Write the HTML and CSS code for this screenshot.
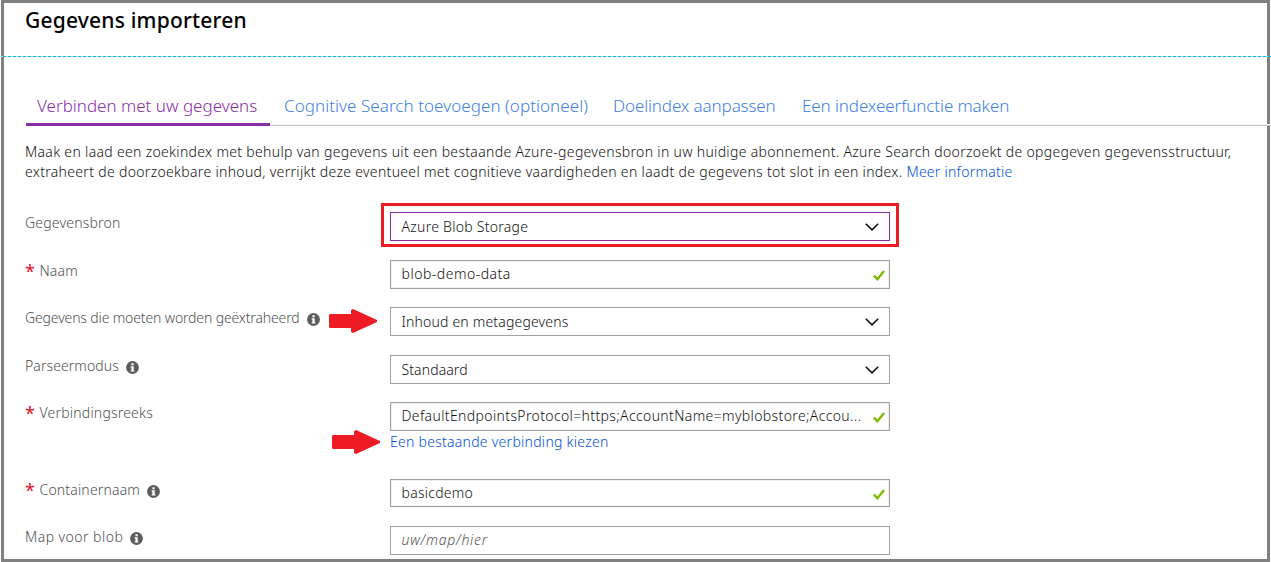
FILE: index.html
```
<!DOCTYPE html>
<html lang="nl">
<head>
<meta charset="utf-8">
<title>Gegevens importeren</title>
<link rel="stylesheet" href="styles.css">
</head>
<body>
<svg class="defs" aria-hidden="true">
  <symbol id="info" viewBox="0 0 13 13">
    <circle cx="6.5" cy="6.5" r="6.4" fill="#5c5c5c"/>
    <path d="M5.4 2.3h2.3v2H5.4zM4.6 5.3h3.1v4.1h.8v1.1H4.6V9.4h.8v-3h-.8z" fill="#fff"/>
  </symbol>
  <symbol id="chevron" viewBox="0 0 14 8">
    <path d="M.8 .8L7 6.8L13.2 .8" fill="none" stroke="#111" stroke-width="1.6"/>
  </symbol>
  <symbol id="check" viewBox="0 0 12 11">
    <path d="M.9 5.6L4.4 9.2L11.1 .9" fill="none" stroke="#7fba00" stroke-width="2.4"/>
  </symbol>
  <symbol id="arrow" viewBox="0 0 48 24">
    <path d="M1 5H22V1L24 0L48 11V13L24 24L22 23V19H1L0 18V6Z" fill="#ed1c24"/>
  </symbol>
</svg>
<main class="frame">
  <header class="header"><h1 class="title">Gegevens importeren</h1></header>
  <nav class="tabs">
    <a class="tab tab-active">Verbinden met uw gegevens</a>
    <a class="tab tab-cognitive">Cognitive Search toevoegen (optioneel)</a>
    <a class="tab tab-index">Doelindex aanpassen</a>
    <a class="tab tab-indexer">Een indexeerfunctie maken</a>
  </nav>
  <p class="intro">Maak en laad een zoekindex met behulp van gegevens uit een bestaande Azure-gegevensbron in uw huidige abonnement. Azure Search doorzoekt de opgegeven gegevensstructuur,<br>extraheert de doorzoekbare inhoud, verrijkt deze eventueel met cognitieve vaardigheden en laadt de gegevens tot slot in een index. <a class="link">Meer informatie</a></p>
  <form class="form">
    <div class="row">
      <label class="label t-source">Gegevensbron</label>
      <div class="field field-focus"><span class="value t-azure">Azure Blob Storage</span><svg class="chevron"><use href="#chevron"/></svg></div>
    </div>
    <div class="row short">
      <label class="label"><span class="req">*</span><span class="t-name">Naam</span></label>
      <div class="field input"><span class="value t-blob">blob-demo-data</span><svg class="check"><use href="#check"/></svg></div>
    </div>
    <div class="row">
      <label class="label"><span class="t-extract">Gegevens die moeten worden geëxtraheerd</span><svg class="info"><use href="#info"/></svg></label>
      <div class="field"><span class="value t-content">Inhoud en metagegevens</span><svg class="chevron"><use href="#chevron"/></svg><svg class="arrow arrow-content"><use href="#arrow"/></svg></div>
    </div>
    <div class="row short">
      <label class="label"><span class="t-parse">Parseermodus</span><svg class="info"><use href="#info"/></svg></label>
      <div class="field"><span class="value t-default">Standaard</span><svg class="chevron"><use href="#chevron"/></svg></div>
    </div>
    <div class="row tall">
      <label class="label"><span class="req">*</span><span class="t-conn">Verbindingsreeks</span></label>
      <div class="control">
        <div class="field input"><span class="value t-string">DefaultEndpointsProtocol=https;AccountName=myblobstore;Accou...</span><svg class="check"><use href="#check"/></svg></div>
        <a class="link choose">Een bestaande verbinding kiezen</a>
        <svg class="arrow arrow-choose"><use href="#arrow"/></svg>
      </div>
    </div>
    <div class="row short">
      <label class="label"><span class="req">*</span><span class="t-container">Containernaam</span><svg class="info"><use href="#info"/></svg></label>
      <div class="field input compact"><span class="value t-basic">basicdemo</span><svg class="check"><use href="#check"/></svg></div>
    </div>
    <div class="row">
      <label class="label"><span class="t-map">Map voor blob</span><svg class="info"><use href="#info"/></svg></label>
      <div class="field empty"><span class="value placeholder">uw/map/hier</span></div>
    </div>
  </form>
</main>
</body>
</html>
```
FILE: styles.css
```
* { box-sizing: border-box; }
body { margin: 0; background: #fff; font: 300 14px/20px "Noto Sans", "Open Sans", sans-serif; color: #111; overflow: hidden; }
.defs { display: none; }
.frame { width: 1269px; height: 562px; margin-left: 1px; border: 3px solid #808080; }

.header { height: 54px; margin: 0 -4px; padding-left: 25px; background: repeating-linear-gradient(90deg, #d0d0d0 0 1px, #00b8f4 1px 4px, #d0d0d0 4px 5px) 2px 100% / 100% 1px repeat-x; }
.title { margin: 0; font-size: 21px; font-weight: 500; line-height: 34px; letter-spacing: .2px; color: #000; }

.tabs { display: flex; height: 69px; margin: 0 -4px 0 22px; padding-top: 33px; border-bottom: 1px solid #c8c8c8; box-shadow: inset 0 -1px #f0f0f0; font-size: 17px; line-height: 32px; color: #3f7fe0; white-space: nowrap; }
.tab { height: 36px; }
.tab-active { width: 244px; padding-left: 11px; border-bottom: 3px solid #8a2da5; color: #8a2da5; }
.tab-cognitive { width: 329px; padding-left: 14px; letter-spacing: .055px; }
.tab-index { width: 189px; padding-left: 14px; letter-spacing: -.12px; }
.tab-indexer { padding-left: 14px; letter-spacing: -.1px; }

.intro { margin: 16px 0 0 21px; letter-spacing: .32px; white-space: nowrap; }
.link { color: #0050d8; letter-spacing: .25px; }

.form { margin: 30px 0 0 21px; }
.row { display: grid; grid-template-columns: 365px 500px; height: 48px; align-items: start; }
.short { height: 47px; }
.tall { height: 77px; }
.label { display: flex; align-items: center; padding-top: 1px; color: #505050; white-space: nowrap; }
.req { width: 14.5px; font-size: 18px; font-weight: 400; color: #e81123; }
.info { width: 13px; height: 13px; margin: 2px 0 0 7px; }

.control { position: relative; }
.field { position: relative; display: flex; align-items: center; height: 29px; padding: 0 10px 0 10.5px; border: 1px solid #a0a0a0; }
.input { padding-bottom: 2px; box-shadow: inset 0 0 0 1px #efefef; }
.compact { height: 28px; padding-bottom: 0; }
.empty { padding-bottom: 2px; }
.field-focus { border-color: #8a2da5; }
.field-focus::after { content: ""; position: absolute; inset: -10px -10px -7px; border: 3px solid #ed1c24; }
.value { flex: 1; min-width: 0; white-space: nowrap; }
.chevron { flex: none; width: 14px; height: 8px; }
.check { flex: none; width: 12px; height: 11px; margin: 3px -6px 0 8px; }
.placeholder { font-style: italic; letter-spacing: .75px; color: #555; }
.choose { display: block; line-height: 22px; letter-spacing: .27px; }
.arrow { position: absolute; width: 48px; height: 24px; }
.arrow-content { left: -62px; top: 1px; }
.arrow-choose { left: -58px; top: 28px; }

.t-source { letter-spacing: .2px; }
.t-name { letter-spacing: .15px; }
.t-extract { letter-spacing: -.14px; }
.t-parse { letter-spacing: .08px; }
.t-conn { letter-spacing: .2px; }
.t-container { letter-spacing: .17px; }
.t-map { letter-spacing: .46px; }
.t-azure { letter-spacing: .27px; }
.t-blob { letter-spacing: .5px; }
.t-content { letter-spacing: .18px; }
.t-default { letter-spacing: .1px; }
.t-string { letter-spacing: .37px; }
.t-basic { letter-spacing: .25px; }
```
